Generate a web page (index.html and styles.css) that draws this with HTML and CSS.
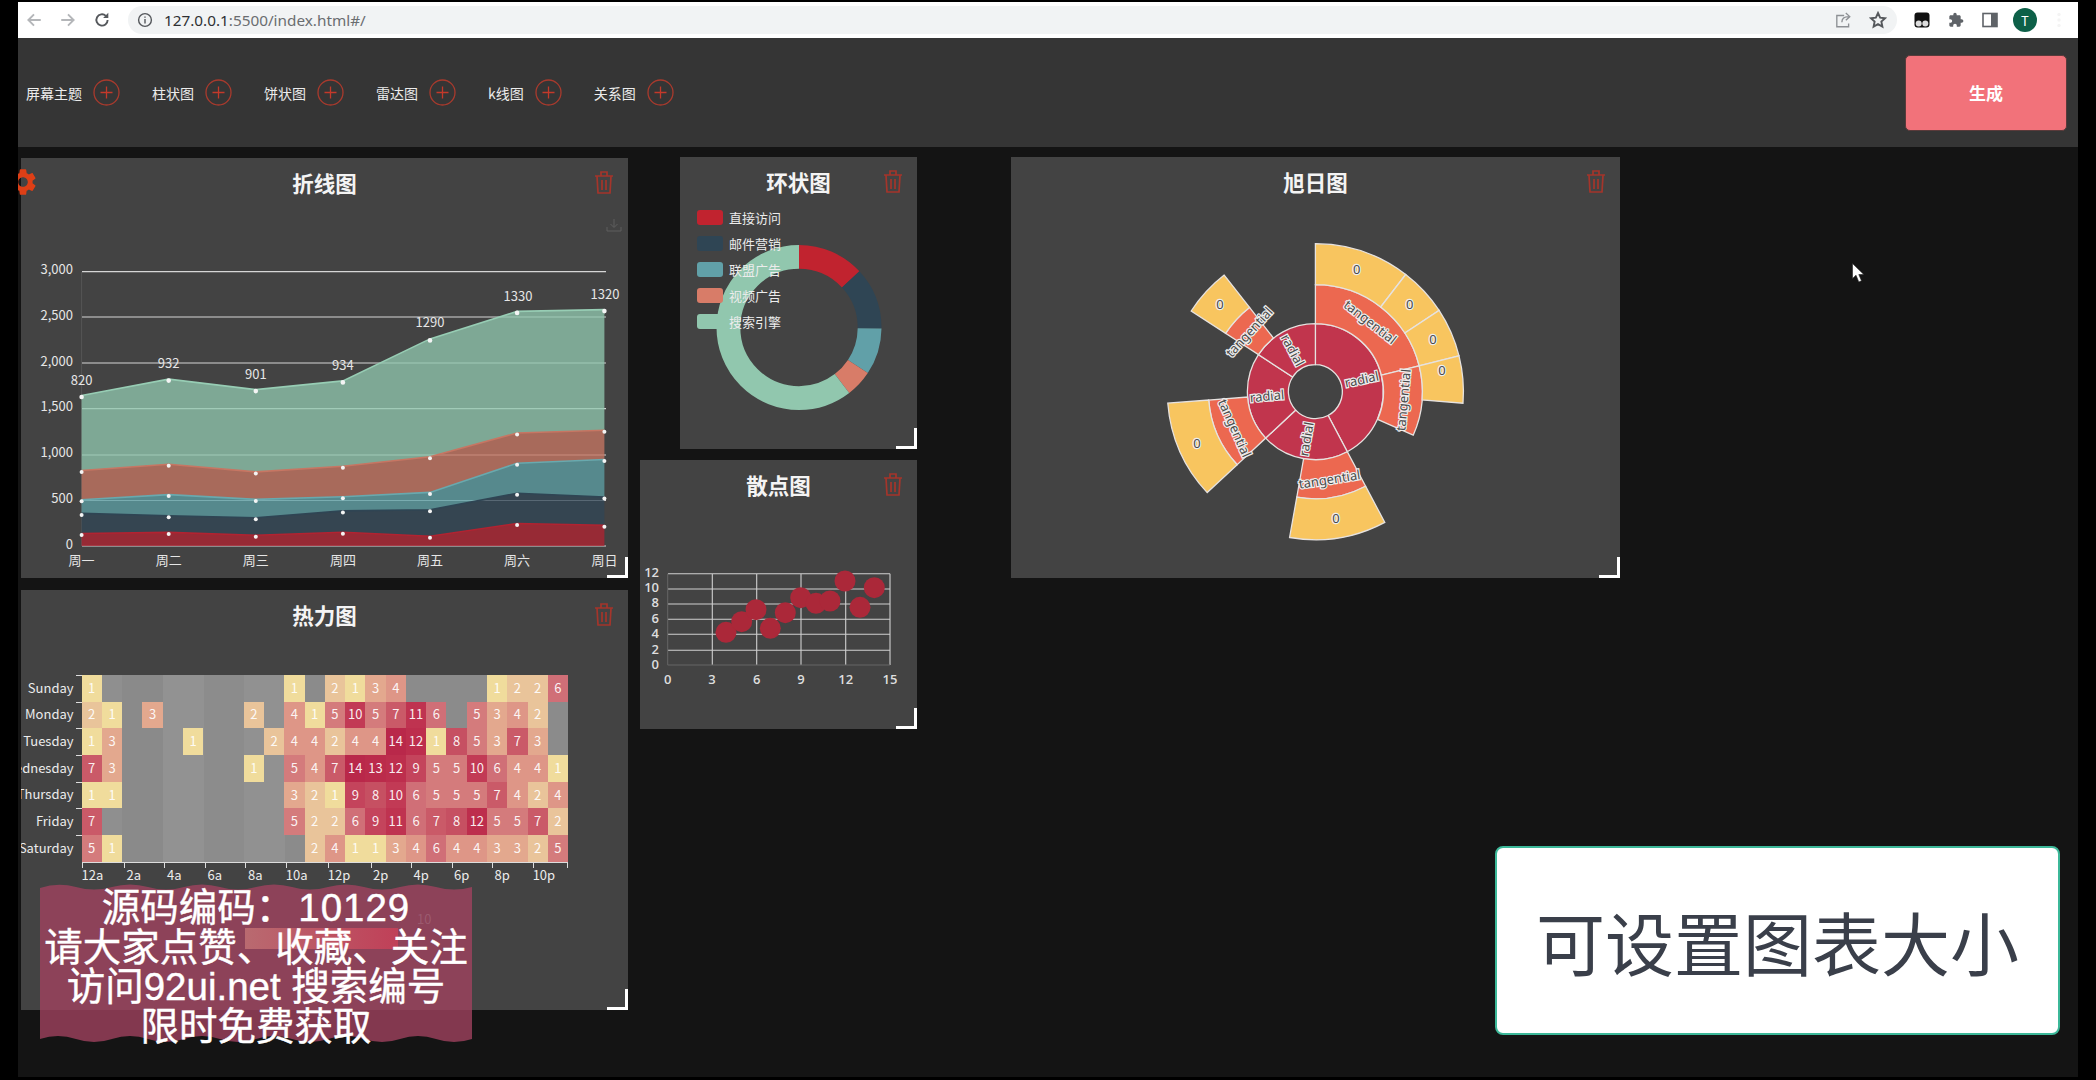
FILE: index.html
```html
<!DOCTYPE html>
<html lang="zh-CN">
<head>
<meta charset="utf-8">
<title>可视化大屏</title>
<link rel="stylesheet" href="styles.css">
</head>
<body>
<div class="frame">
  <div class="browser">
    <div class="nav">
      <svg class="ico muted" viewBox="0 0 16 16"><path d="M14 8H3M8 3L3 8l5 5"/></svg>
      <svg class="ico muted" viewBox="0 0 16 16"><path d="M2 8h11M8 3l5 5-5 5"/></svg>
      <svg class="ico dark" viewBox="0 0 16 16"><path d="M13 8a5 5 0 1 1-1.6-3.7"/><path class="fill" d="M13.6 1.6v4.6H9z"/></svg>
    </div>
    <div class="address">
      <div class="url">
        <svg class="info" viewBox="0 0 16 16"><circle cx="8" cy="8" r="6.4"/><path d="M8 7v4.4M8 4.4v1.4"/></svg>
        <span class="host">127.0.0.1</span><span class="path">:5500/index.html#/</span>
      </div>
      <div class="addr-actions">
        <svg class="ico grey" viewBox="0 0 16 16"><path d="M9 4H2.5v10h10.5v-3M7 10c0-4 2.500-5 6-5M10.500 1.800L14 5l-3.500 3.200"/></svg>
        <svg class="ico dark" viewBox="0 0 16 16"><path d="M8 1.800l1.900 4.100 4.400.5-3.300 3 .9 4.400L8 11.600l-3.900 2.200.9-4.400-3.300-3 4.400-.5z"/></svg>
      </div>
    </div>
    <div class="exts">
      <svg class="ext" viewBox="0 0 16 16"><rect x="0.500" y="0.500" width="15" height="15" rx="3" fill="#111"/><circle cx="4.700" cy="11.500" r="3" fill="#ddd"/><circle cx="11.300" cy="11.500" r="3" fill="#ddd"/></svg>
      <svg class="ext" viewBox="0 0 24 24"><path fill="#5f6368" d="M20.500 11H19V7c0-1.100-.9-2-2-2h-4V3.500C13 2.120 11.880 1 10.500 1S8 2.120 8 3.500V5H4c-1.100 0-1.990.9-1.990 2v3.800H3.500c1.490 0 2.700 1.210 2.700 2.700s-1.210 2.700-2.700 2.700H2V20c0 1.100.9 2 2 2h3.800v-1.500c0-1.490 1.210-2.700 2.700-2.700 1.490 0 2.700 1.210 2.700 2.700V22H17c1.100 0 2-.9 2-2v-4h1.500c1.380 0 2.500-1.120 2.500-2.500S21.880 11 20.500 11z"/></svg>
      <svg class="ext" viewBox="0 0 16 16"><rect x="1" y="1.500" width="14" height="13" fill="none" stroke="#5f6368" stroke-width="1.600"/><rect x="9" y="1.500" width="6" height="13" fill="#5f6368"/></svg>
      <span class="avatar">T</span>
      <svg class="ext dots" viewBox="0 0 16 16"><circle cx="8" cy="2.500" r="1.700"/><circle cx="8" cy="8" r="1.700"/><circle cx="8" cy="13.500" r="1.700"/></svg>
    </div>
  </div>

  <header class="topbar">
    <ul class="adders">
      <li>屏幕主题<svg class="plus" viewBox="0 0 27 27"><circle cx="13.500" cy="13.500" r="12.500"/><path d="M13.500 7.500v12M7.500 13.500h12"/></svg></li>
      <li>柱状图<svg class="plus" viewBox="0 0 27 27"><circle cx="13.500" cy="13.500" r="12.500"/><path d="M13.500 7.500v12M7.500 13.500h12"/></svg></li>
      <li>饼状图<svg class="plus" viewBox="0 0 27 27"><circle cx="13.500" cy="13.500" r="12.500"/><path d="M13.500 7.500v12M7.500 13.500h12"/></svg></li>
      <li>雷达图<svg class="plus" viewBox="0 0 27 27"><circle cx="13.500" cy="13.500" r="12.500"/><path d="M13.500 7.500v12M7.500 13.500h12"/></svg></li>
      <li>k线图<svg class="plus" viewBox="0 0 27 27"><circle cx="13.500" cy="13.500" r="12.500"/><path d="M13.500 7.500v12M7.500 13.500h12"/></svg></li>
      <li>关系图<svg class="plus" viewBox="0 0 27 27"><circle cx="13.500" cy="13.500" r="12.500"/><path d="M13.500 7.500v12M7.500 13.500h12"/></svg></li>
    </ul>
    <button class="generate">生成</button>
  </header>

  <main class="stage">
    <!-- 折线图 -->
    <section class="card card-line">
      <svg class="gear" viewBox="0 0 24 24"><path d="M19.140 12.940c.04-.3.06-.61.06-.94 0-.32-.02-.64-.07-.94l2.030-1.580c.18-.14.23-.41.12-.61l-1.920-3.320c-.12-.22-.37-.29-.59-.22l-2.390.96c-.5-.38-1.030-.7-1.620-.94l-.36-2.540c-.04-.24-.24-.41-.48-.41h-3.840c-.24 0-.43.17-.47.41l-.36 2.540c-.59.24-1.130.57-1.620.94l-2.390-.96c-.22-.08-.47 0-.59.22L2.740 8.870c-.12.21-.08.47.12.61l2.030 1.580c-.05.3-.09.63-.09.94s.02.64.07.94l-2.030 1.580c-.18.14-.23.41-.12.61l1.920 3.320c.12.22.37.29.59.22l2.390-.96c.5.38 1.030.7 1.620.94l.36 2.540c.05.24.24.41.48.41h3.840c.24 0 .44-.17.47-.41l.36-2.540c.59-.24 1.130-.56 1.620-.94l2.390.96c.22.08.47 0 .59-.22l1.920-3.320c.12-.22.07-.47-.12-.61l-2.010-1.580zM12 15.600c-1.980 0-3.600-1.620-3.600-3.600s1.620-3.600 3.600-3.600 3.600 1.620 3.600 3.600-1.620 3.600-3.600 3.600z"/></svg>
      <h2 class="card-title">折线图</h2>
      <svg class="trash" viewBox="0 0 20 24"><path d="M1 6h18M7 6V2h6v4M3 6l1 17h12l1-17M8 10v10M12 10v10"/></svg>
      <svg class="chart" width="607" height="368" viewBox="21 210 607 368">
        <path class="save" d="M614 219v8M610.500 224l3.500 3.500 3.500-3.500M607 227v4h14v-4"/>
        <path class="axis-y" d="M81.600 272V546"/>
        <g class="grid">
          <path d="M82 271.700H606M82 317H606M82 363H606M82 408.700H606M82 455H606M82 500.500H606M82 546H606"/>
        </g>
        <g class="bands">
          <polygon fill="#b12331" points="81.600,535 168.700,533.900 255.800,536.800 342.900,533.800 430,537.800 517.100,525 604.400,526.800 604.400,547.500 81.600,547.500"/>
          <polygon fill="#314656" points="81.600,514.900 168.700,517.300 255.800,519.300 342.900,512.400 430,511.300 517.100,494.800 604.400,498.500 604.400,526.800 517.100,525 430,537.800 342.900,533.800 255.800,536.800 168.700,533.900 81.600,535"/>
          <polygon fill="#5d9fa4" points="81.600,501.200 168.700,496.100 255.800,500.900 342.900,498.300 430,493.900 517.100,464.700 604.400,461 604.400,498.500 517.100,494.800 430,511.300 342.900,512.400 255.800,519.300 168.700,517.300 81.600,514.900"/>
          <polygon fill="#c77663" points="81.600,472 168.700,465.800 255.800,473.400 342.900,467.800 430,458.300 517.100,434.500 604.400,431.800 604.400,461 517.100,464.700 430,493.900 342.900,498.300 255.800,500.900 168.700,496.100 81.600,501.200"/>
          <polygon fill="#91c7ae" points="81.600,397 168.700,380.600 255.800,391.100 342.900,382.400 430,340.400 517.100,312.900 604.400,311.100 604.400,431.800 517.100,434.500 430,458.300 342.900,467.800 255.800,473.400 168.700,465.800 81.600,472"/>
        </g>
        <g class="strokes">
          <polyline stroke="#b12331" points="81.600,535 168.700,533.900 255.800,536.800 342.900,533.800 430,537.800 517.100,525 604.400,526.800"/>
          <polyline stroke="#2f4554" points="81.600,514.900 168.700,517.300 255.800,519.300 342.900,512.400 430,511.300 517.100,494.800 604.400,498.500"/>
          <polyline stroke="#69a9ae" points="81.600,501.200 168.700,496.100 255.800,500.900 342.900,498.300 430,493.900 517.100,464.700 604.400,461"/>
          <polyline stroke="#c77663" points="81.600,472 168.700,465.800 255.800,473.400 342.900,467.800 430,458.300 517.100,434.500 604.400,431.800"/>
          <polyline stroke="#97cdb4" points="81.600,397 168.700,380.600 255.800,391.100 342.900,382.400 430,340.400 517.100,312.900 604.400,311.100"/>
        </g>
        <g class="dots">
          <circle cx="81.600" cy="535" r="2"/><circle cx="168.700" cy="533.900" r="2"/><circle cx="255.800" cy="536.800" r="2"/><circle cx="342.900" cy="533.800" r="2"/><circle cx="430" cy="537.800" r="2"/><circle cx="517.100" cy="525" r="2"/><circle cx="604.400" cy="526.800" r="2"/>
          <circle cx="81.600" cy="514.900" r="2"/><circle cx="168.700" cy="517.300" r="2"/><circle cx="255.800" cy="519.300" r="2"/><circle cx="342.900" cy="512.400" r="2"/><circle cx="430" cy="511.300" r="2"/><circle cx="517.100" cy="494.800" r="2"/><circle cx="604.400" cy="498.500" r="2"/>
          <circle cx="81.600" cy="501.200" r="2"/><circle cx="168.700" cy="496.100" r="2"/><circle cx="255.800" cy="500.900" r="2"/><circle cx="342.900" cy="498.300" r="2"/><circle cx="430" cy="493.900" r="2"/><circle cx="517.100" cy="464.700" r="2"/><circle cx="604.400" cy="461" r="2"/>
          <circle cx="81.600" cy="472" r="2"/><circle cx="168.700" cy="465.800" r="2"/><circle cx="255.800" cy="473.400" r="2"/><circle cx="342.900" cy="467.800" r="2"/><circle cx="430" cy="458.300" r="2"/><circle cx="517.100" cy="434.500" r="2"/><circle cx="604.400" cy="431.800" r="2"/>
          <circle cx="81.600" cy="397" r="2.300"/><circle cx="168.700" cy="380.600" r="2.300"/><circle cx="255.800" cy="391.100" r="2.300"/><circle cx="342.900" cy="382.400" r="2.300"/><circle cx="430" cy="340.400" r="2.300"/><circle cx="517.100" cy="312.900" r="2.300"/><circle cx="604.400" cy="311.100" r="2.300"/>
        </g>
        <g class="lbl end">
          <text x="73" y="270">3,000</text><text x="73" y="316.500">2,500</text><text x="73" y="362">2,000</text><text x="73" y="407">1,500</text><text x="73" y="453">1,000</text><text x="73" y="499">500</text><text x="73" y="545">0</text>
        </g>
        <g class="lbl mid">
          <text x="81.600" y="561">周一</text><text x="168.700" y="561">周二</text><text x="255.800" y="561">周三</text><text x="342.900" y="561">周四</text><text x="430" y="561">周五</text><text x="517.100" y="561">周六</text><text x="604.400" y="561">周日</text>
          <text x="81.600" y="381">820</text><text x="168.700" y="364">932</text><text x="255.800" y="375">901</text><text x="342.900" y="366">934</text><text x="430" y="323">1290</text><text x="518" y="297">1330</text><text x="605" y="295">1320</text>
        </g>
      </svg>
      <span class="handle"></span>
    </section>

    <!-- 热力图 -->
    <section class="card card-heat">
      <h2 class="card-title">热力图</h2>
      <svg class="trash" viewBox="0 0 20 24"><path d="M1 6h18M7 6V2h6v4M3 6l1 17h12l1-17M8 10v10M12 10v10"/></svg>
      <div class="heat">
        <ul class="heat-y">
          <li>Sunday</li><li>Monday</li><li>Tuesday</li><li>Wednesday</li><li>Thursday</li><li>Friday</li><li>Saturday</li>
        </ul>
        <div class="heat-grid">
          <b class="v1">1</b><b></b><b></b><b></b><b></b><b></b><b></b><b></b><b></b><b></b><b class="v1">1</b><b></b><b class="v2">2</b><b class="v1">1</b><b class="v3">3</b><b class="v4">4</b><b></b><b></b><b></b><b></b><b class="v1">1</b><b class="v2">2</b><b class="v2">2</b><b class="v6">6</b>
          <b class="v2">2</b><b class="v1">1</b><b></b><b class="v3">3</b><b></b><b></b><b></b><b></b><b class="v2">2</b><b></b><b class="v4">4</b><b class="v1">1</b><b class="v5">5</b><b class="v10">10</b><b class="v5">5</b><b class="v7">7</b><b class="v11">11</b><b class="v6">6</b><b></b><b class="v5">5</b><b class="v3">3</b><b class="v4">4</b><b class="v2">2</b><b></b>
          <b class="v1">1</b><b class="v3">3</b><b></b><b></b><b></b><b class="v1">1</b><b></b><b></b><b></b><b class="v2">2</b><b class="v4">4</b><b class="v4">4</b><b class="v2">2</b><b class="v4">4</b><b class="v4">4</b><b class="v14">14</b><b class="v12">12</b><b class="v1">1</b><b class="v8">8</b><b class="v5">5</b><b class="v3">3</b><b class="v7">7</b><b class="v3">3</b><b></b>
          <b class="v7">7</b><b class="v3">3</b><b></b><b></b><b></b><b></b><b></b><b></b><b class="v1">1</b><b></b><b class="v5">5</b><b class="v4">4</b><b class="v7">7</b><b class="v14">14</b><b class="v13">13</b><b class="v12">12</b><b class="v9">9</b><b class="v5">5</b><b class="v5">5</b><b class="v10">10</b><b class="v6">6</b><b class="v4">4</b><b class="v4">4</b><b class="v1">1</b>
          <b class="v1">1</b><b class="v1">1</b><b></b><b></b><b></b><b></b><b></b><b></b><b></b><b></b><b class="v3">3</b><b class="v2">2</b><b class="v1">1</b><b class="v9">9</b><b class="v8">8</b><b class="v10">10</b><b class="v6">6</b><b class="v5">5</b><b class="v5">5</b><b class="v5">5</b><b class="v7">7</b><b class="v4">4</b><b class="v2">2</b><b class="v4">4</b>
          <b class="v7">7</b><b></b><b></b><b></b><b></b><b></b><b></b><b></b><b></b><b></b><b class="v5">5</b><b class="v2">2</b><b class="v2">2</b><b class="v6">6</b><b class="v9">9</b><b class="v11">11</b><b class="v6">6</b><b class="v7">7</b><b class="v8">8</b><b class="v12">12</b><b class="v5">5</b><b class="v5">5</b><b class="v7">7</b><b class="v2">2</b>
          <b class="v5">5</b><b class="v1">1</b><b></b><b></b><b></b><b></b><b></b><b></b><b></b><b></b><b></b><b class="v2">2</b><b class="v4">4</b><b class="v1">1</b><b class="v1">1</b><b class="v3">3</b><b class="v4">4</b><b class="v6">6</b><b class="v4">4</b><b class="v4">4</b><b class="v3">3</b><b class="v3">3</b><b class="v2">2</b><b class="v5">5</b>
        </div>
        <ul class="heat-x">
          <li>12a</li><li>2a</li><li>4a</li><li>6a</li><li>8a</li><li>10a</li><li>12p</li><li>2p</li><li>4p</li><li>6p</li><li>8p</li><li>10p</li>
        </ul>
      </div>
      <span class="handle"></span>
    </section>

    <!-- 环状图 -->
    <section class="card card-donut">
      <h2 class="card-title">环状图</h2>
      <svg class="trash" viewBox="0 0 20 24"><path d="M1 6h18M7 6V2h6v4M3 6l1 17h12l1-17M8 10v10M12 10v10"/></svg>
      <svg class="chart" width="237" height="240" viewBox="680 209 237 240">
        <g class="donut" transform="rotate(-90 799 327.500)">
          <circle cx="799" cy="327.500" r="70.600" pathLength="2562" stroke="#c1232f" stroke-dasharray="335 2562"/>
          <circle cx="799" cy="327.500" r="70.600" pathLength="2562" stroke="#2f4554" stroke-dasharray="310 2562" stroke-dashoffset="-335"/>
          <circle cx="799" cy="327.500" r="70.600" pathLength="2562" stroke="#61a0a8" stroke-dasharray="234 2562" stroke-dashoffset="-645"/>
          <circle cx="799" cy="327.500" r="70.600" pathLength="2562" stroke="#d87c68" stroke-dasharray="135 2562" stroke-dashoffset="-879"/>
          <circle cx="799" cy="327.500" r="70.600" pathLength="2562" stroke="#91c7ae" stroke-dasharray="1548 2562" stroke-dashoffset="-1014"/>
        </g>
      </svg>
      <ul class="legend">
        <li><i class="sw-red"></i>直接访问</li>
        <li><i class="sw-navy"></i>邮件营销</li>
        <li><i class="sw-teal"></i>联盟广告</li>
        <li><i class="sw-salmon"></i>视频广告</li>
        <li><i class="sw-green"></i>搜索引擎</li>
      </ul>
      <span class="handle"></span>
    </section>

    <!-- 散点图 -->
    <section class="card card-scatter">
      <h2 class="card-title">散点图</h2>
      <svg class="trash" viewBox="0 0 20 24"><path d="M1 6h18M7 6V2h6v4M3 6l1 17h12l1-17M8 10v10M12 10v10"/></svg>
      <svg class="chart" width="277" height="217" viewBox="640 512 277 217">
        <path class="sgrid" d="M668 573.700H890M668 589H890M668 604H890M668 619.300H890M668 634.300H890M668 650.300H890M712.300 573.700V665M756.700 573.700V665M801 573.700V665M845.700 573.700V665M890 573.700V665"/>
        <path class="saxis" d="M667.700 573.700V665H890"/>
        <g class="sdots">
          <circle cx="726" cy="632.300" r="10.500"/><circle cx="741.700" cy="621.700" r="10.500"/><circle cx="756" cy="609.700" r="10.500"/><circle cx="770.300" cy="628.300" r="10.500"/><circle cx="785.300" cy="612.700" r="10.500"/><circle cx="800.700" cy="597.700" r="10.500"/><circle cx="816" cy="603.300" r="10.500"/><circle cx="830" cy="601" r="10.500"/><circle cx="845" cy="581" r="10.500"/><circle cx="860" cy="607.300" r="10.500"/><circle cx="874.300" cy="587.700" r="10.500"/>
        </g>
        <g class="slbl end">
          <text x="659" y="572">12</text><text x="659" y="587">10</text><text x="659" y="602">8</text><text x="659" y="618">6</text><text x="659" y="633">4</text><text x="659" y="649">2</text><text x="659" y="664">0</text>
        </g>
        <g class="slbl mid">
          <text x="667.700" y="679">0</text><text x="712" y="679">3</text><text x="756.700" y="679">6</text><text x="801" y="679">9</text><text x="845.700" y="679">12</text><text x="890" y="679">15</text>
        </g>
      </svg>
      <span class="handle"></span>
    </section>

    <!-- 旭日图 -->
    <section class="card card-sun">
      <h2 class="card-title">旭日图</h2>
      <svg class="trash" viewBox="0 0 20 24"><path d="M1 6h18M7 6V2h6v4M3 6l1 17h12l1-17M8 10v10M12 10v10"/></svg>
      <svg class="chart" width="609" height="369" viewBox="1011 209 609 369">
        <g class="sun" transform="translate(1315.400 391.700)">
          <g class="ring1">
            <path d="M0 -68A68 68 0 0 1 31.900 60L12.700 23.800A27 27 0 0 0 0 -27Z"/>
            <path d="M31.900 60A68 68 0 0 1 -49.700 46.400L-19.700 18.400A27 27 0 0 0 12.700 23.800Z"/>
            <path d="M-49.700 46.400A68 68 0 0 1 -57 -37.100L-22.700 -14.700A27 27 0 0 0 -19.700 18.400Z"/>
            <path d="M-57 -37.100A68 68 0 0 1 0 -68L0 -27A27 27 0 0 0 -22.700 -14.700Z"/>
          </g>
          <g class="ring2">
            <path d="M0 -107A107 107 0 0 1 103.800 -25.900L66 -16.500A68 68 0 0 0 0 -68Z"/>
            <path d="M103.800 -25.900A107 107 0 0 1 97.800 43.500L62.200 27.700A68 68 0 0 0 66 -16.500Z"/>
            <path d="M50.200 94.500A107 107 0 0 1 -18.600 105.400L-11.800 67A68 68 0 0 0 31.900 60Z"/>
            <path d="M-78.200 73A107 107 0 0 1 -106.700 8.300L-67.800 5.300A68 68 0 0 0 -49.700 46.400Z"/>
            <path d="M-89.800 -58.300A107 107 0 0 1 -65.900 -84.300L-41.900 -53.600A68 68 0 0 0 -57 -37.100Z"/>
          </g>
          <g class="ring3">
            <path d="M0 -148A148 148 0 0 1 90.300 -117.200L65.300 -84.700A107 107 0 0 0 0 -107Z"/>
            <path d="M90.300 -117.200A148 148 0 0 1 123.700 -81.300L89.500 -58.700A107 107 0 0 0 65.300 -84.700Z"/>
            <path d="M123.700 -81.300A148 148 0 0 1 143.600 -35.800L103.800 -25.900A107 107 0 0 0 89.500 -58.700Z"/>
            <path d="M143.600 -35.800A148 148 0 0 1 147.600 11.500L106.700 8.300A107 107 0 0 0 103.800 -25.900Z"/>
            <path d="M69.400 130.700A148 148 0 0 1 -25.800 145.800L-18.600 105.400A107 107 0 0 0 50.200 94.500Z"/>
            <path d="M-108.200 100.900A148 148 0 0 1 -147.600 11.500L-106.700 8.300A107 107 0 0 0 -78.200 73Z"/>
            <path d="M-124.200 -80.700A148 148 0 0 1 -91.200 -116.600L-65.900 -84.300A107 107 0 0 0 -89.800 -58.300Z"/>
          </g>
        </g>
        <g class="sunlbl">
          <text x="1361.600" y="379" transform="rotate(-12 1361.600 379)">radial</text>
          <text x="1293" y="350" transform="rotate(62 1293 350)">radial</text>
          <text x="1267" y="395.700" transform="rotate(-5 1267 395.700)">radial</text>
          <text x="1306" y="439" transform="rotate(-80 1306 439)">radial</text>
          <text x="1370.400" y="321.700" transform="rotate(38 1370.400 321.700)">tangential</text>
          <text x="1403" y="400" transform="rotate(-85 1403 400)">tangential</text>
          <text x="1249" y="331.700" transform="rotate(-47.500 1249 331.700)">tangential</text>
          <text x="1235" y="428" transform="rotate(66 1235 428)">tangential</text>
          <text x="1329.500" y="479" transform="rotate(-9 1329.500 479)">tangential</text>
          <text x="1356.800" y="269">0</text><text x="1409.800" y="304">0</text><text x="1433" y="339.300">0</text><text x="1442" y="370">0</text><text x="1220" y="304">0</text><text x="1197" y="443.300">0</text><text x="1336" y="517.700">0</text>
        </g>
      </svg>
      <span class="handle"></span>
    </section>

    <aside class="callout">可设置图表大小</aside>

    <aside class="banner">
      <svg class="banner-bg" viewBox="0 0 432 163" preserveAspectRatio="none"><path d="M0 6Q18 0 36 5T72 5T108 5T144 5T180 5T216 5T252 5T288 5T324 5T360 5T396 5T432 5V157Q414 163 396 157T360 157T324 157T288 157T252 157T216 157T180 157T144 157T108 157T72 157T36 157T0 157Z"/></svg>
      <span class="vmap"></span>
      <span class="vmap-val">10</span>
      <p class="banner-text">源码编码：<span class="code">10129</span><br>请大家点赞、收藏、关注<br>访问92ui.net 搜索编号<br>限时免费获取</p>
    </aside>

    <svg class="cursor" viewBox="0 0 13 20"><path d="M0.500 0.500V15.500L4 12.200L6.800 19L9.500 17.800L6.800 11.500H11.800Z"/></svg>
  </main>
</div>
</body>
</html>
```

FILE: styles.css
```css
* { box-sizing: border-box; }
html, body { margin: 0; height: 100%; background: #000; }
body { padding: 2px 18px 3px; overflow: hidden; font-family: "Noto Sans CJK SC", "Noto Sans", sans-serif; }
ul { margin: 0; padding: 0; list-style: none; }
.frame { width: 2060px; height: 1075px; background: #141414; overflow: hidden; display: flex; flex-direction: column; }

/* browser chrome */
.browser { height: 36px; flex: none; background: #fff; display: flex; align-items: center; }
.nav { width: 110px; flex: none; padding-left: 7px; display: flex; gap: 16px; align-items: center; }
.ico { width: 18px; height: 18px; fill: none; stroke-width: 1.700; }
.ico.muted { stroke: #b4b6b9; }
.ico.dark { stroke: #55585c; }
.ico.grey { stroke: #8d9094; stroke-width: 1.200; }
.ico .fill { fill: #55585c; stroke: none; }
.address { flex: none; width: 1769px; height: 28px; background: #f1f3f4; border-radius: 14px; display: flex; align-items: center; justify-content: space-between; padding: 0 10px 0 9px; }
.url { display: flex; align-items: center; font-family: "Noto Sans", sans-serif; font-size: 15.300px; }
.info { width: 16px; height: 16px; margin-right: 11px; fill: none; stroke: #55585c; stroke-width: 1.400; }
.host { color: #2e3033; }
.path { color: #6a6d70; }
.addr-actions { display: flex; gap: 17px; margin-right: 0; }
.exts { flex: 1; display: flex; align-items: center; padding-left: 17px; gap: 18px; }
.ext { width: 16px; height: 16px; flex: none; }
.avatar { width: 24px; height: 24px; margin: 0 0 0 -3px; border-radius: 50%; background: #0d6048; color: #fff; font-size: 13px; display: flex; align-items: center; justify-content: center; flex: none; }
.dots { fill: #5f6368; margin-left: -4px; }

/* top bar */
.topbar { height: 109px; flex: none; background: #353535; display: flex; align-items: center; justify-content: space-between; padding: 0 11px 0 8px; }
.adders { display: flex; gap: 32px; }
.adders li { display: flex; align-items: center; gap: 11px; color: #ececec; font-size: 14px; }
.plus { width: 27px; height: 27px; fill: none; stroke: #a93a2d; stroke-width: 1.300; }
.plus path { stroke: #c4392a; }
.generate { width: 162px; height: 76px; border: 1px solid #5a3a3a; border-radius: 5px; background: #f2727a; color: #fff; font: 700 17px "Noto Sans CJK SC", sans-serif; }

/* free canvas */
.stage { position: relative; flex: 1; }
.card { position: absolute; background: #434343; }
.card-line { left: 3px; top: 11px; width: 607px; height: 420px; }
.card-heat { left: 3px; top: 443px; width: 607px; height: 420px; overflow: hidden; }
.card-donut { left: 662px; top: 10px; width: 237px; height: 292px; }
.card-scatter { left: 622px; top: 313px; width: 277px; height: 269px; }
.card-sun { left: 993px; top: 10px; width: 609px; height: 421px; }
.card-title { margin: 0 0 2px; height: 50px; line-height: 50px; text-align: center; color: #f4f4f4; font-size: 21.500px; font-weight: 700; }
.chart { display: block; }
.trash { position: absolute; right: 14px; top: 12px; width: 20px; height: 24px; fill: none; stroke: #a5352b; stroke-width: 1.700; }
.gear { position: absolute; left: -14px; top: 8px; width: 32px; height: 32px; fill: #de3f16; }
.handle { position: absolute; right: 0; bottom: 0; width: 21px; height: 21px; border-right: 3px solid #fff; border-bottom: 3px solid #fff; }

/* line chart */
.save { fill: none; stroke: #5e5e5e; stroke-width: 1; }
.axis-y { stroke: #555; fill: none; }
.grid path { stroke: #d6d6d6; stroke-width: 1.200; fill: none; }
.bands polygon { fill-opacity: .77; }
.bands, .strokes { transform: translateY(-1.500px); }
.strokes polyline { fill: none; stroke-width: 1.600; }
.dots circle { fill: #f4f4f4; }
.lbl { transform: translateY(-2px); }
.lbl text { fill: #e6e6e6; font-size: 13px; dominant-baseline: central; }
.slbl text { fill: #dedede; font: 600 13px "Open Sans", sans-serif; dominant-baseline: central; }
.end text { text-anchor: end; }
.mid text { text-anchor: middle; }

/* heatmap */
.heat { margin-top: 35px; display: grid; grid-template-columns: 60.600px 486.500px; grid-template-rows: 186.700px auto; }
.heat-y li { height: 26.670px; display: flex; justify-content: flex-end; align-items: center; white-space: nowrap; padding: 0 8px 2px 0; color: #ececec; font-size: 13px; background: linear-gradient(#ddd, #ddd) right top / 6px 1px no-repeat; }
.heat-grid { display: grid; grid-template-columns: repeat(24, 1fr); grid-template-rows: repeat(7, 1fr); background: linear-gradient(90deg, #8f8f8f 8.300%, #8a8a8a 8.300%, #8a8a8a 16.700%, #929292 16.700%, #929292 25%, #8c8c8c 25%, #8c8c8c 33.300%, #919191 33.300%, #919191 41.700%, #8b8b8b 41.700%); }
.heat-grid b { display: flex; align-items: center; justify-content: center; padding-bottom: 2px; color: rgba(255, 255, 255, .92); font-size: 13px; font-weight: 400; }
.v1 { background: #f0dc9c; }
.v2 { background: #e9c49a; }
.v3 { background: #e3a88e; }
.v4 { background: #de9687; }
.v5 { background: #d47b7c; }
.v6 { background: #d06f77; }
.v7 { background: #ca5a68; }
.v8 { background: #c65062; }
.v9 { background: #c4445c; }
.v10 { background: #c23a55; }
.v11 { background: #bf3350; }
.v12 { background: #bd2e4d; }
.v13 { background: #bb2b4b; }
.v14 { background: #b9284a; }
.heat-x { grid-column: 2; display: flex; position: relative; border-top: 1.500px solid #ddd; }
.heat-x::after { content: ""; position: absolute; right: 0; top: 0; width: 1px; height: 5px; background: #ddd; }
.heat-x li { flex: 0 0 40.540px; padding: 3px 20.270px 0 0; text-align: center; white-space: nowrap; line-height: 17px; color: #ececec; font-size: 13px; background: linear-gradient(#ddd, #ddd) left top / 1px 5px no-repeat; }

/* donut */
.donut circle { fill: none; stroke-width: 23.800; }
.legend { position: absolute; left: 17px; top: 50px; display: flex; flex-direction: column; gap: 6px; }
.legend li { height: 20px; display: flex; align-items: center; gap: 6px; color: #ececec; font-size: 13px; }
.legend i { width: 26px; height: 15px; border-radius: 3px; flex: none; }
.sw-red { background: #c1232f; }
.sw-navy { background: #2f4554; }
.sw-teal { background: #61a0a8; }
.sw-salmon { background: #d87c68; }
.sw-green { background: #91c7ae; }

/* scatter */
.sgrid { fill: none; stroke: #cfcfcf; stroke-width: 1.100; }
.saxis { fill: none; stroke: #666; }
.sdots circle { fill: #ab2839; }

/* sunburst */
.sun path { stroke: #e6e2e0; stroke-width: 1.300; }
.ring1 path { fill: #c1354d; }
.ring2 path { fill: #ec6850; }
.ring3 path { fill: #f8c55f; }
.sunlbl text { fill: #4a4a4a; stroke: #eeeeee; stroke-width: 2.400; paint-order: stroke; font: 13px "Noto Sans", sans-serif; text-anchor: middle; dominant-baseline: central; }

/* overlays */
.callout { position: absolute; left: 1477px; top: 699px; width: 565px; height: 189px; background: #fff; border: 2px solid #3cb899; border-radius: 8px; display: flex; align-items: center; justify-content: center; color: #3a3f4a; font-size: 69px; white-space: nowrap; }
.banner { position: absolute; left: 22px; top: 735px; width: 432px; height: 163px; z-index: 5; }
.banner-bg { position: absolute; inset: 0; width: 100%; height: 100%; }
.banner-bg path { fill: rgba(161, 66, 95, .79); }
.vmap { position: absolute; left: 205px; top: 46px; width: 153px; height: 21px; background: linear-gradient(90deg, #b96a70, #c04058); }
.vmap-val { position: absolute; left: 377px; top: 30px; color: rgba(255, 255, 255, .14); font-size: 13px; line-height: 14px; }
.banner-text { position: relative; margin: 6px 0 0; text-align: center; color: #fff; font: 38.500px/39.500px "Liberation Sans", "Noto Sans CJK SC", sans-serif; -webkit-text-stroke: .4px #fff; white-space: nowrap; }
.code { letter-spacing: 1px; margin-left: 4px; }
.cursor { position: absolute; left: 1834px; top: 116px; width: 13px; height: 20px; fill: #fff; stroke: #222; stroke-width: .6; }
```
